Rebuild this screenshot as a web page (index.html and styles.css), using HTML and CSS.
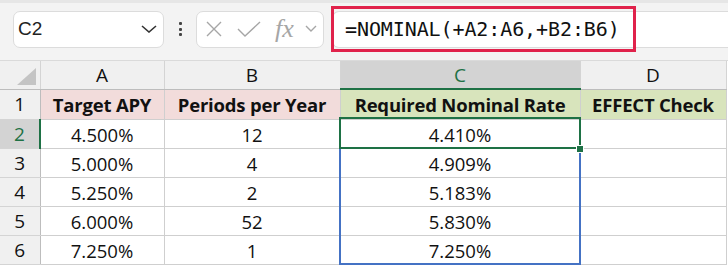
FILE: index.html
```html
<!DOCTYPE html>
<html lang="en">
<head>
  <meta charset="UTF-8">
  <title>NOMINAL</title>
  <link rel="stylesheet" href="styles.css">
</head>
<body>

  <div class="toolbar">
    <div class="name-box">
      <span class="name-text">C2</span>
      <svg class="chev" width="16" height="8" viewBox="0 0 16 8"><path d="M1 1 L8 7 L15 1" fill="none" stroke="#333" stroke-width="1.6"/></svg>
    </div>
    <div class="dots"><i></i><i></i><i></i></div>
    <div class="fn-box">
      <svg width="18" height="16" viewBox="0 0 18 16"><path d="M2 1 L16 15 M16 1 L2 15" fill="none" stroke="#a6a6a6" stroke-width="1.4"/></svg>
      <svg width="24" height="16" viewBox="0 0 24 16"><path d="M1 8 L8 15 L23 1" fill="none" stroke="#a6a6a6" stroke-width="1.4"/></svg>
      <span class="fx">fx</span>
      <svg width="12" height="8" viewBox="0 0 12 8"><path d="M1 1 L6 6 L11 1" fill="none" stroke="#a6a6a6" stroke-width="1.4"/></svg>
    </div>
    <div class="formula">
      <div class="formula-text">=NOMINAL(+A2:A6,+B2:B6)</div>
    </div>
  </div>

  <div class="sheet">
    <table class="grid">
      <colgroup>
        <col class="c-rh"><col class="c-a"><col class="c-b"><col class="c-c"><col class="c-d">
      </colgroup>
      <tr class="colhead">
        <th class="corner"><span class="tri"></span></th>
        <th>A</th><th>B</th><th class="sel">C</th><th>D</th>
      </tr>
      <tr class="r1">
        <th class="rh">1</th>
        <td class="pink">Target APY</td>
        <td class="pink">Periods per Year</td>
        <td class="green">Required Nominal Rate</td>
        <td class="green">EFFECT Check</td>
      </tr>
      <tr>
        <th class="rh sel">2</th><td>4.500%</td><td>12</td><td>4.410%</td><td></td>
      </tr>
      <tr>
        <th class="rh">3</th><td>5.000%</td><td>4</td><td>4.909%</td><td></td>
      </tr>
      <tr>
        <th class="rh">4</th><td>5.250%</td><td>2</td><td>5.183%</td><td></td>
      </tr>
      <tr>
        <th class="rh">5</th><td>6.000%</td><td>52</td><td>5.830%</td><td></td>
      </tr>
      <tr>
        <th class="rh">6</th><td>7.250%</td><td>1</td><td>7.250%</td><td></td>
      </tr>
    </table>
    <div class="range"></div>
    <div class="active"></div>
    <div class="handle"></div>
  </div>

</body>
</html>
```

FILE: styles.css
```css
body {
  margin: 0;
  background: #fff;
  font-family: "Open Sans", sans-serif;
  width: 728px;
  height: 270px;
  overflow: hidden;
}

.toolbar {
  height: 61px;
  background: #f3f3f3;
  border-top: 3px solid #e6e6e6;
  border-bottom: 1px solid #dadada;
  box-sizing: border-box;
  display: flex;
  align-items: center;
  padding-bottom: 5px;
}

.name-box {
  margin-left: 13px;
  width: 151px;
  height: 37px;
  box-sizing: border-box;
  background: #fff;
  border: 1px solid #dcdcdc;
  border-radius: 7px;
  display: flex;
  align-items: center;
  justify-content: space-between;
  padding: 0 6px 0 4px;
}

.name-text {
  font-family: "Liberation Sans", sans-serif;
  font-size: 19px;
  color: #222;
}

.dots {
  width: 32px;
  display: flex;
  flex-direction: column;
  align-items: center;
  gap: 2.5px;
}

.dots i {
  width: 3px;
  height: 3px;
  background: #444;
  border-radius: 1px;
}

.fn-box {
  width: 128px;
  height: 37px;
  box-sizing: border-box;
  background: #fff;
  border: 1px solid #dcdcdc;
  border-radius: 7px;
  display: flex;
  align-items: center;
  padding: 0 4px 0 8px;
  gap: 14px;
}

.fn-box .fx {
  font-family: "Liberation Serif", serif;
  font-style: italic;
  font-size: 26px;
  color: #a6a6a6;
  margin-right: -3px;
  line-height: 1;
}

.formula {
  flex: 1;
  margin-left: 8px;
  height: 37px;
  background: #fff;
  border-top: 1px solid #dcdcdc;
  border-left: 1px solid #dcdcdc;
  border-bottom: 1px solid #dcdcdc;
  border-radius: 7px 0 0 7px;
  box-sizing: border-box;
  display: flex;
  align-items: center;
}

.formula-text {
  margin-left: -2px;
  width: 305px;
  height: 46px;
  box-sizing: border-box;
  border: 3px solid #e0224b;
  font-family: "DejaVu Sans Mono", monospace;
  font-size: 20px;
  color: #111;
  display: flex;
  align-items: center;
  padding-left: 11px;
  letter-spacing: -0.1px;
}

.sheet {
  position: relative;
}

.grid {
  border-collapse: collapse;
  table-layout: fixed;
  width: 726px;
  font-size: 18.5px;
  color: #111;
}

.c-rh { width: 40px; }
.c-a { width: 124px; }
.c-b { width: 176px; }
.c-c { width: 240px; }
.c-d { width: 146px; }

.grid th, .grid td {
  padding: 0;
  text-align: center;
  white-space: nowrap;
  overflow: hidden;
}

.grid td {
  height: 28px;
  border: 1px solid #cfcfcf;
}

.colhead th {
  height: 27px;
  background: #f0f0f0;
  font-weight: normal;
  font-size: 19px;
  border-right: 1px solid #d4d4d4;
  border-bottom: 1px solid #bdbdbd;
  color: #111;
}

.colhead th.sel {
  background: #d3d3d3;
  color: #1e7145;
  border-bottom: 2px solid #1e7145;
}

.corner {
  position: relative;
}

.tri {
  position: absolute;
  right: 4px;
  bottom: 4px;
  width: 0;
  height: 0;
  border-left: 19px solid transparent;
  border-bottom: 17px solid #c4c4c4;
}

.rh {
  background: #f0f0f0;
  font-weight: normal;
  font-size: 19px;
  border-right: 1px solid #bdbdbd;
  border-bottom: 1px solid #d4d4d4;
}

.rh.sel {
  background: #d3d3d3;
  color: #1e7145;
  border-right: 2px solid #1e7145;
}

.r1 td {
  height: 29px;
  font-weight: bold;
  font-size: 18.5px;
  letter-spacing: -0.2px;
}

.pink { background: #f2dcdb; }
.green { background: #d8e4bc; }

.range {
  position: absolute;
  left: 339px;
  top: 86px;
  width: 238px;
  height: 116px;
  border: 2px solid #4472c4;
  border-top: none;
}

.active {
  position: absolute;
  left: 339px;
  top: 56px;
  width: 238px;
  height: 28px;
  border: 2px solid #1e7145;
}

.handle {
  position: absolute;
  left: 576px;
  top: 84px;
  width: 6px;
  height: 6px;
  background: #1e7145;
  border: 1px solid #fff;
}
```
